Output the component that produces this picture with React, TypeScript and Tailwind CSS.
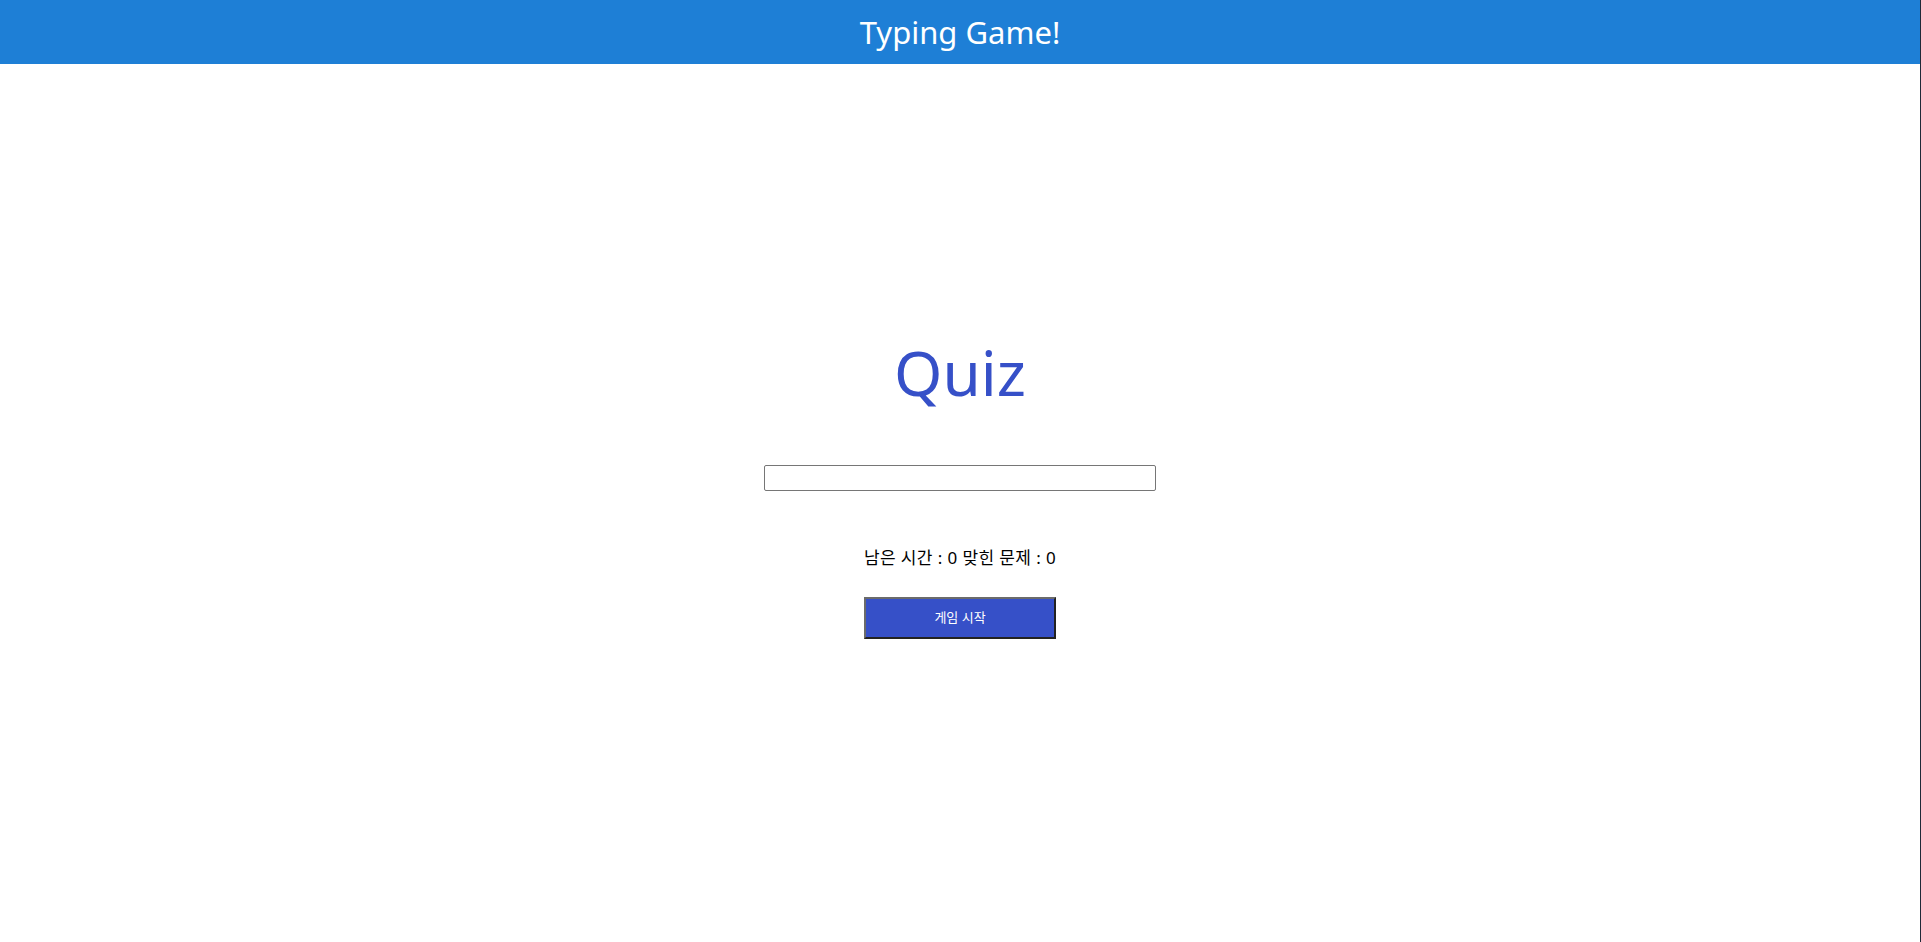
export default function App() {
  return (
    <div className="min-h-screen bg-white font-['Noto_Sans','Noto_Sans_CJK_KR',sans-serif] border-r border-[#1f2937]">
      <header className="h-16 bg-[#1e7fd6] flex items-center justify-center">
        <h1 className="text-[31px] text-white font-normal">Typing Game!</h1>
      </header>

      <main className="flex flex-col items-center pt-[266px]">
        <h2 className="text-[62px] leading-[84px] text-[#3650c8]">Quiz</h2>

        <input
          type="text"
          className="mt-[51px] w-[392px] h-[26px] border border-[#767676] rounded-[2px] px-1 text-sm"
        />

        <p className="mt-[54px] text-[17px] tracking-[0.4px] text-black">남은 시간 : 0 맞힌 문제 : 0</p>

        <button className="mt-[26px] w-[192px] h-[42px] bg-[#3650c8] text-white text-[13px] border-2 border-t-[#6b6b6b] border-l-[#6b6b6b] border-b-[#222] border-r-[#222]">
          게임 시작
        </button>
      </main>
    </div>
  );
}
